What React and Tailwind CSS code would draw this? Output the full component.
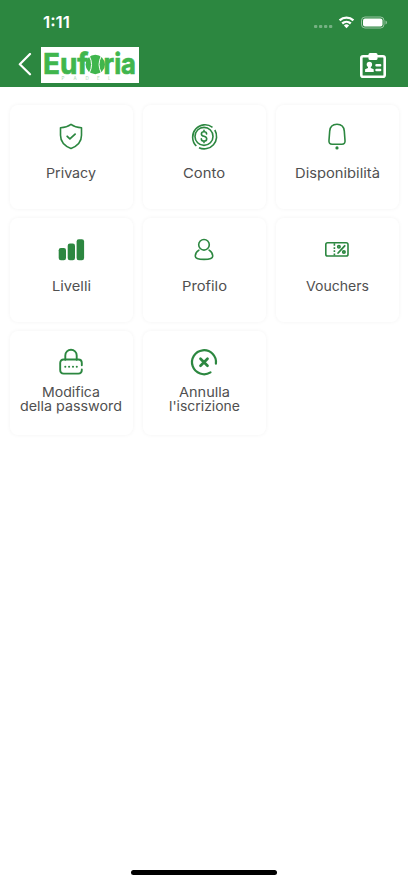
const GREEN = '#2c8740';

function Icon({ children }) {
  return (
    <svg width="32" height="32" viewBox="0 0 32 32" fill="none" stroke={GREEN} strokeWidth="1.6" strokeLinecap="round" strokeLinejoin="round">
      {children}
    </svg>
  );
}

const shield = (
  <Icon>
    <path d="M16 4.300C13.200 6.400 9.800 7.600 5.500 7.800v7.400c0 6.400 4 10.700 10.500 13.300 6.500-2.600 10.500-6.900 10.500-13.300V7.800C22.200 7.600 18.800 6.400 16 4.300Z" />
    <path d="m12.200 16.300 2.700 2.500 5.200-4.700" strokeWidth="1.800" />
  </Icon>
);

const coin = (
  <Icon>
    <g strokeLinecap="butt">
      <circle cx="16" cy="16.400" r="9" />
      <path d="M8.300 26A12.400 12.400 0 0 1 24.500 7.300M26.800 10A12.400 12.400 0 0 1 11 27.700" />
    </g>
    <path d="M18.600 13.900c0-1.500-1-2.200-2.600-2.200s-2.600.8-2.600 2.200c0 3.300 5.300 1.500 5.300 4.800 0 1.500-1 2.400-2.700 2.400s-2.700-.9-2.700-2.400M16 10.200v1.400M16 21.200v1.400" />
  </Icon>
);

const bell = (
  <Icon>
    <path d="M16 4.300c-4.500 0-7 3-7.300 6.800L8 20.300c-.3 2.700.8 3.900 3.200 3.900h9.600c2.400 0 3.500-1.200 3.200-3.900l-.7-9.200C23 7.300 20.500 4.300 16 4.300Z" />
    <circle cx="16" cy="27.900" r="1.600" fill={GREEN} stroke="none" />
  </Icon>
);

const bars = (
  <Icon>
    <g fill={GREEN} stroke="none">
      <rect x="3.700" y="15" width="7.300" height="12.200" rx="2.200" />
      <rect x="12.700" y="10.600" width="7.300" height="16.600" rx="2.200" />
      <rect x="21.600" y="6.200" width="7.500" height="21" rx="2.200" />
    </g>
  </Icon>
);

const person = (
  <Icon>
    <circle cx="16" cy="11.800" r="5.300" />
    <path d="M10.900 17.200C8.700 18.600 7.300 20.700 7.300 23.200c0 2 3.800 3.200 8.700 3.200s8.700-1.200 8.700-3.200c0-2.500-1.400-4.600-3.600-6" />
  </Icon>
);

const voucher = (
  <Icon>
    <rect x="4.800" y="9.800" width="22.200" height="13.200" rx="1.800" />
    <g strokeLinecap="butt">
      <path d="M13.400 10.200v2.600m0 1.500v1.600m0 1.400v1.600m0 1.500v2.200" />
    </g>
    <path d="m17.100 20 6.600-7.200" strokeWidth="1.800" />
    <circle cx="17.900" cy="13.800" r="1.200" strokeWidth="1.700" />
    <circle cx="22.900" cy="19" r="1.200" strokeWidth="1.700" />
  </Icon>
);

const lock = (
  <Icon>
    <g strokeWidth="1.900">
      <path d="M10.300 13.700V9.400a5.700 5.700 0 0 1 11.400 0v4.300" />
      <path d="M26.800 19.200V17c0-2.300-1.200-3.500-3.500-3.500H8.700c-2.300 0-3.500 1.200-3.500 3.500v7.100c0 2.300 1.200 3.500 3.500 3.500h14.600c2.300 0 3.500-1.200 3.500-3.500v-.6" />
    </g>
    <g fill={GREEN} stroke="none">
      <circle cx="10.300" cy="20.700" r="1.050" />
      <circle cx="14.100" cy="20.700" r="1.050" />
      <circle cx="18" cy="20.700" r="1.050" />
      <circle cx="21.800" cy="20.700" r="1.050" />
    </g>
  </Icon>
);

const cancel = (
  <Icon>
    <path d="M27.900 17.700A12 12 0 1 0 22.500 26.300" strokeWidth="2.200" />
    <path d="m12.500 12.700 7 7m0-7-7 7" strokeWidth="2.700" />
  </Icon>
);

const items = [
  { icon: shield, lines: [['Privacy', 50]] },
  { icon: coin, lines: [['Conto', 42]] },
  { icon: bell, lines: [['Disponibilità', 85]] },
  { icon: bars, lines: [['Livelli', 39]] },
  { icon: person, lines: [['Profilo', 45]] },
  { icon: voucher, lines: [['Vouchers', 63]] },
  { icon: lock, lines: [['Modifica', 58], ['della password', 102]] },
  { icon: cancel, lines: [['Annulla', 51], ["l'iscrizione", 71]] },
];

function Label({ text, width }) {
  return (
    <svg className="block overflow-visible" width={width} height="14">
      <text x="0" y="11" textLength={width} lengthAdjust="spacingAndGlyphs" fontSize="13.5" fill="#505050" fontFamily="Inter, sans-serif">
        {text}
      </text>
    </svg>
  );
}

function Card({ icon, lines }) {
  return (
    <button className="flex h-[104px] flex-col items-center rounded-lg bg-white pt-[15px] shadow-[0_0_4px_rgba(0,0,0,0.05)]">
      {icon}
      <span className={lines.length > 1 ? 'mt-[8px] flex flex-col items-center' : 'mt-[15px] flex flex-col items-center'}>
        {lines.map(([text, width]) => (
          <Label key={text} text={text} width={width} />
        ))}
      </span>
    </button>
  );
}

function Logo() {
  return (
    <svg className="ml-[9px] overflow-visible" width="98" height="36" viewBox="0 0 98 36">
      <path fill="#fff" d="M0 0h98v36H0z" />
      <g fill="#40b64d" stroke="#40b64d" strokeWidth=".7" fontFamily="Inter, sans-serif" fontWeight="700" fontSize="29">
        <text x="2" y="26.500" textLength="45.500" lengthAdjust="spacingAndGlyphs">Euf</text>
        <text x="62.500" y="26.500" textLength="32.500" lengthAdjust="spacingAndGlyphs">ria</text>
      </g>
      <circle cx="54.300" cy="17.500" r="9.700" fill="#40b64d" />
      <path d="M48.300 9q4.500 8.500 0 17M60.300 9q-4.500 8.500 0 17" fill="none" stroke="#fff" strokeWidth="1" />
      <text x="20.500 32.500 44.500 56 67" y="32.800" fill="#a6d9ad" fontFamily="Inter, sans-serif" fontSize="4.500">PADEL</text>
    </svg>
  );
}

function StatusBar() {
  return (
    <div className="flex h-[47px] items-start justify-between pl-[42px] pr-[20px] pt-[14px]">
      <svg className="overflow-visible" width="30" height="18">
        <text x="1" y="14.300" fontSize="16.500" fontWeight="600" fill="#fff" textLength="27" lengthAdjust="spacingAndGlyphs" fontFamily="Inter, sans-serif">1:11</text>
      </svg>
      <svg width="76" height="18" viewBox="0 0 76 18">
        <g fill="#fff" opacity=".35">
          <rect x="2" y="11" width="3.300" height="3" rx="1" />
          <rect x="7" y="11" width="3.300" height="3" rx="1" />
          <rect x="12" y="11" width="3.300" height="3" rx="1" />
          <rect x="17" y="11" width="3.300" height="3" rx="1" />
        </g>
        <g fill="none" stroke="#fff" strokeWidth="2.400">
          <path d="M27.600 6.300a10.200 10.200 0 0 1 13.800 0" />
          <path d="M30.200 9.500a6.400 6.400 0 0 1 8.600 0" />
        </g>
        <path d="M34.500 14.200 31.900 11.500a3.800 3.800 0 0 1 5.200 0Z" fill="#fff" />
        <rect x="49.500" y="3" width="22.500" height="11" rx="3.500" fill="none" stroke="#fff" strokeOpacity=".5" />
        <rect x="51" y="4.500" width="19.500" height="8" rx="2" fill="#fff" />
        <path d="M73.500 6.500c2 .8 2 3.200 0 4Z" fill="#fff" opacity=".5" />
      </svg>
    </div>
  );
}

export default function App() {
  return (
    <div className="flex h-[883px] w-[408px] flex-col bg-white">
      <header className="h-[87px] bg-[#2c8740]">
        <StatusBar />
        <div className="flex h-9 items-center pl-[18px] pr-[21px]">
          <svg width="14" height="24" viewBox="0 0 14 24" fill="none" stroke="#fff" strokeWidth="2.200" strokeLinecap="round" strokeLinejoin="round">
            <path d="M12 1 1.800 11.300l10.200 10" />
          </svg>
          <Logo />
          <svg className="ml-auto" width="28" height="28" viewBox="0 0 28 28">
            <rect x="2.300" y="5.300" width="23.400" height="20.400" rx="1.800" fill="none" stroke="#fff" strokeWidth="2.600" />
            <rect x="9.500" y="2" width="9" height="7" rx="1.500" fill="#fff" />
            <circle cx="10.400" cy="13.500" r="2.700" fill="#fff" />
            <path d="M9 15h2.800v1.900l2.900 1.400v2.700H6.100v-2.700l2.900-1.400Z" fill="#fff" />
            <path d="M17.500 14.300h3.600M17.500 19h3.600" stroke="#fff" strokeWidth="2.500" strokeLinecap="round" />
          </svg>
        </div>
      </header>
      <main className="grid grid-cols-3 gap-x-[10px] gap-y-[9px] px-[9.500px] pt-[18px]">
        {items.map((item) => (
          <Card key={item.lines[0][0]} {...item} />
        ))}
      </main>
      <div className="mx-auto mb-2 mt-auto h-[5px] w-[146px] rounded-full bg-black" />
    </div>
  );
}
